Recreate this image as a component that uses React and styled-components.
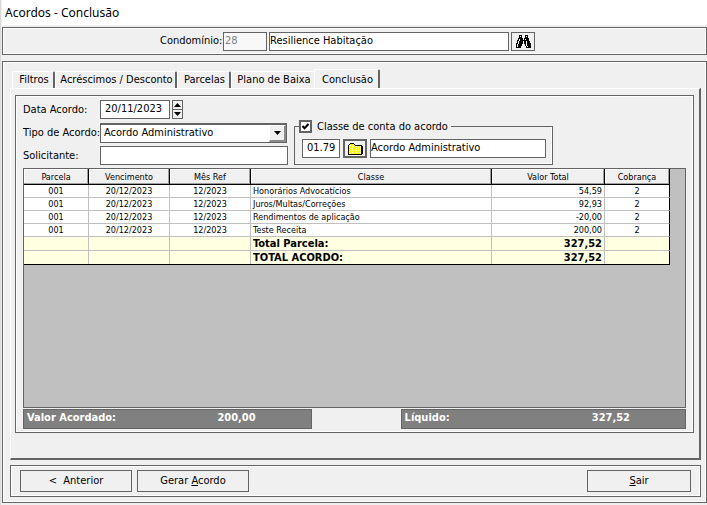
import React from "react";
import styled, { createGlobalStyle } from "styled-components";

const GlobalStyle = createGlobalStyle`
  * {
    box-sizing: border-box;
  }
  body {
    margin: 0;
    background: #f0f0f0;
    color: #000;
    font: 11px/14px "DejaVu Sans Condensed", "DejaVu Sans", Tahoma, sans-serif;
  }
  input, button, select {
    font: inherit;
    color: inherit;
    border-radius: 0;
    margin: 0;
    min-width: 0;
  }
`;

const Window = styled.div`
  display: flex;
  flex-direction: column;
  min-height: 100vh;
  padding: 0 0 2px 1px;
  border-left: 1px solid #d8d8d8;
`;

const Title = styled.h1`
  margin: 0;
  height: 25px;
  padding-left: 3px;
  background: #fff;
  font: 12px/25px "Noto Sans", sans-serif;
`;

const Panel = styled.div`
  border: 1px solid #646464;
  box-shadow: inset 0 0 0 1px #fff;
`;

const Header = styled(Panel)`
  display: flex;
  align-items: center;
  gap: 2px;
  height: 28px;
  margin-top: 2px;
  padding-left: 157px;
`;

const Main = styled(Panel)`
  flex: 1;
  display: flex;
  flex-direction: column;
  margin-top: 6px;
  padding: 7px 5px 5px 7px;
`;

const Label = styled.label`
  width: ${(p) => p.$width}px;
  flex: none;
  white-space: nowrap;
`;

const TextBox = styled.input`
  width: ${(p) => p.$width}px;
  height: 19px;
  padding: 0 0 2px ${(p) => p.$indent || 0}px;
  border: 1px solid #646464;
  background: #fff;
  outline: none;
  &:disabled {
    color: #808080;
    background: #f8f8f8;
  }
`;

const IconButton = styled.button`
  display: flex;
  align-items: center;
  justify-content: center;
  width: 24px;
  height: 19px;
  padding: 0;
  border: ${(p) => (p.$thick ? 2 : 1)}px solid #646464;
  background: #f0f0f0;
`;

const Tabs = styled.div`
  display: flex;
  align-items: flex-end;
  height: 19px;
  padding-left: 2px;
`;

const Tab = styled.button`
  width: ${(p) => p.$width}px;
  height: ${(p) => (p.$active ? 20 : 17)}px;
  margin-bottom: ${(p) => (p.$active ? -1 : 0)}px;
  padding: 0 0 0 2px;
  border: 1px solid #fff;
  border-right: ${(p) => (p.$flat ? "0" : "2px solid #646464")};
  border-bottom: 0;
  border-radius: 2px 2px 0 0;
  background: #f0f0f0;
  white-space: nowrap;
`;

const TabPage = styled.div`
  flex: 1;
  display: flex;
  flex-direction: column;
  padding: 6px 5px 25px 4px;
  border: 1px solid #fff;
  border-right: 2px solid #646464;
  border-bottom: 2px solid #646464;
`;

const Sheet = styled(Panel)`
  flex: 1;
  display: flex;
  flex-direction: column;
  padding: 2px 7px 3px;
`;

const Form = styled.div`
  display: flex;
  gap: 6px;
  margin-bottom: 1px;
`;

const Field = styled.div`
  display: flex;
  align-items: center;
  height: 23px;
`;

const Spinner = styled.div`
  display: flex;
  flex-direction: column;
  margin-left: 2px;
  border: 1px solid #646464;
`;

const SpinButton = styled.button`
  display: flex;
  align-items: center;
  justify-content: center;
  width: 9px;
  height: 8px;
  padding: 0;
  border: 0;
  background: #f0f0f0;
  & + & {
    height: 9px;
    border-top: 1px solid #646464;
  }
`;

const SelectWrap = styled.div`
  display: grid;
  width: 187px;
  height: 20px;
  border: 1px solid #646464;
  border-top: 2px solid #646464;
  background: #fff;
  > * {
    grid-area: 1 / 1;
  }
`;

const Select = styled.select`
  appearance: none;
  padding: 0 18px 0 3px;
  border: 0;
  background: transparent;
  outline: none;
`;

const Arrow = styled.span`
  display: flex;
  align-items: center;
  justify-content: center;
  justify-self: end;
  width: 17px;
  border: 1px solid #fff;
  border-right: 2px solid #8a8a8a;
  border-bottom: 2px solid #8a8a8a;
  background: #f0f0f0;
  pointer-events: none;
`;

const Group = styled.fieldset`
  width: 259px;
  height: 45px;
  margin: 22px 0 0;
  padding: 6px 0 0 4px;
  border: 1px solid #646464;
  box-shadow: inset -1px -1px 0 #fff;
`;

const Legend = styled.legend`
  display: flex;
  align-items: center;
  gap: 5px;
  height: 13px;
  padding: 0 3px 0 0;
  background: #f0f0f0;
`;

const Check = styled.input`
  appearance: none;
  width: 13px;
  height: 13px;
  margin: 0;
  border: 2px solid #646464;
  background: #fff
    url("data:image/svg+xml,%3Csvg xmlns='http://www.w3.org/2000/svg' viewBox='0 0 9 9'%3E%3Cpath d='M1.5 4l2 2.2L7.5 2' fill='none' stroke='%23000' stroke-width='2'/%3E%3C/svg%3E");
`;

const GroupRow = styled.div`
  display: flex;
  gap: 3px;
  padding-left: 3px;
`;

const GridArea = styled.div`
  flex: 1;
  min-height: 160px;
  padding-right: 15px;
  border: 1px solid #646464;
  background: #c0c0c0;
`;

const Table = styled.table`
  width: 100%;
  table-layout: fixed;
  border-collapse: separate;
  border-spacing: 0;
  border-bottom: 1px solid #000;
  font-size: 9px;
  line-height: 12px;
`;

const Th = styled.th`
  width: ${(p) => (p.$width ? p.$width + "px" : "auto")};
  height: 16px;
  padding: 0;
  border-right: 1px solid #000;
  border-bottom: 1px solid #000;
  background: #f0f0f0;
  box-shadow: inset -1px -1px 0 #a0a0a0, inset 1px 1px 0 #fff;
  font-weight: normal;
`;

const Td = styled.td`
  height: 13px;
  padding: 0 2px;
  border-right: 1px solid #c0c0c0;
  border-bottom: 1px solid #c0c0c0;
  background: #fff;
  text-align: ${(p) => p.$align || "center"};
  white-space: nowrap;
  &:last-child {
    border-right-color: #000;
  }
`;

const TotalTd = styled(Td)`
  height: 14px;
  background: #ffffe1;
  font-size: 11px;
  font-weight: bold;
  tr:last-child > & {
    height: 13px;
    border-bottom: 0;
  }
`;

const Summary = styled.div`
  display: flex;
  gap: 89px;
  margin-top: 1px;
`;

const SummaryBar = styled.div`
  flex: ${(p) => p.$grow} 1 0;
  display: flex;
  justify-content: space-between;
  height: 20px;
  padding: 1px 55px 0 3px;
  border: 1px solid #646464;
  background: #808080;
  color: #fff;
  font-weight: bold;
`;

const Footer = styled(Panel)`
  display: flex;
  gap: 5px;
  height: 32px;
  margin-top: 5px;
  padding: 4px 9px;
`;

const Button = styled.button`
  width: ${(p) => p.$width}px;
  height: 22px;
  margin-left: ${(p) => (p.$end ? "auto" : 0)};
  padding: 0;
  border: 1px solid #646464;
  background: #f0f0f0;
  white-space: pre;
`;

const colors = { "#": "#000", y: "#ffff00", w: "#fff" };

const binoculars = [
  "...###...###...",
  "...#w#...#w#...",
  "...###...###...",
  "..#####.#####..",
  "..#w###.#w###..",
  ".##w#########..",
  ".#w####w##w###.",
  ".#w####w##w###.",
  "##w####.##w####",
  "#w####...#w####",
  "#w####...#w####",
  "#w###.....#w###",
  "#####.....#####",
];

const folder = [
  "..####.........",
  ".#ywyy#........",
  "#ywyywy#######.",
  "#yyywyyywyyyw##",
  "#wyyywyyywyyy##",
  "#yyywyyywyyyw##",
  "#wyyywyyywyyy##",
  "#yyywyyywyyyw##",
  "#wyyywyyywyyy##",
  "#yyywyyywyyyw##",
  "#wyyywyyywyyy##",
  "##############.",
];

function PixelIcon({ rows }) {
  return (
    <svg width={rows[0].length} height={rows.length} shapeRendering="crispEdges" aria-hidden="true">
      {rows.map((row, y) =>
        [...row].map((c, x) =>
          colors[c] ? (
            <rect key={`${x}-${y}`} x={x} y={y} width="1" height="1" fill={colors[c]} />
          ) : null
        )
      )}
    </svg>
  );
}

function Triangle({ up, size = 7 }) {
  const h = (size + 1) / 2;
  return (
    <svg width={size} height={h} aria-hidden="true">
      <path d={up ? `M0 ${h}L${size / 2} 0L${size} ${h}z` : `M0 0H${size}L${size / 2} ${h}z`} />
    </svg>
  );
}

const tabs = [
  { name: "Filtros", width: 43 },
  { name: "Acréscimos / Desconto", width: 122 },
  { name: "Parcelas", width: 54 },
  { name: "Plano de Baixa", width: 83, flat: true },
  { name: "Conclusão", width: 66, active: true },
];

const rows = [
  ["Honorários Advocatícios", "54,59"],
  ["Juros/Multas/Correções", "92,93"],
  ["Rendimentos de aplicação", "-20,00"],
  ["Teste Receita", "200,00"],
];

const totals = [
  ["Total Parcela:", "327,52"],
  ["TOTAL ACORDO:", "327,52"],
];

function App() {
  return (
    <>
      <GlobalStyle />
      <Window>
        <Title>Acordos - Conclusão</Title>
        <Header>
          <Label htmlFor="condominio" $width={61}>Condomínio:</Label>
          <TextBox id="condominio" $width={44} $indent={1} defaultValue="28" disabled />
          <TextBox aria-label="Nome do condomínio" $width={240} defaultValue="Resilience Habitação" />
          <IconButton type="button" aria-label="Pesquisar">
            <PixelIcon rows={binoculars} />
          </IconButton>
        </Header>
        <Main>
          <Tabs role="tablist">
            {tabs.map((t) => (
              <Tab
                key={t.name}
                type="button"
                role="tab"
                aria-selected={!!t.active}
                $width={t.width}
                $active={t.active}
                $flat={t.flat}
              >
                {t.name}
              </Tab>
            ))}
          </Tabs>
          <TabPage>
            <Sheet>
              <Form>
                <div>
                  <Field>
                    <Label htmlFor="data" $width={77}>Data Acordo:</Label>
                    <TextBox id="data" $width={70} $indent={4} defaultValue="20/11/2023" />
                    <Spinner>
                      <SpinButton type="button" aria-label="Próximo dia">
                        <Triangle up />
                      </SpinButton>
                      <SpinButton type="button" aria-label="Dia anterior">
                        <Triangle />
                      </SpinButton>
                    </Spinner>
                  </Field>
                  <Field>
                    <Label htmlFor="tipo" $width={77}>Tipo de Acordo:</Label>
                    <SelectWrap>
                      <Select id="tipo">
                        <option>Acordo Administrativo</option>
                      </Select>
                      <Arrow>
                        <Triangle />
                      </Arrow>
                    </SelectWrap>
                  </Field>
                  <Field>
                    <Label htmlFor="solicitante" $width={77}>Solicitante:</Label>
                    <TextBox id="solicitante" $width={188} />
                  </Field>
                </div>
                <Group>
                  <Legend>
                    <Check id="classe" type="checkbox" defaultChecked />
                    <label htmlFor="classe">Classe de conta do acordo</label>
                  </Legend>
                  <GroupRow>
                    <TextBox aria-label="Código da classe" $width={38} $indent={4} defaultValue="01.79" />
                    <IconButton type="button" aria-label="Abrir classes" $thick>
                      <PixelIcon rows={folder} />
                    </IconButton>
                    <TextBox aria-label="Nome da classe" $width={176} defaultValue="Acordo Administrativo" />
                  </GroupRow>
                </Group>
              </Form>
              <GridArea>
                <Table>
                  <thead>
                    <tr>
                      <Th $width={65}>Parcela</Th>
                      <Th $width={81}>Vencimento</Th>
                      <Th $width={81}>Mês Ref</Th>
                      <Th>Classe</Th>
                      <Th $width={113}>Valor Total</Th>
                      <Th $width={65}>Cobrança</Th>
                    </tr>
                  </thead>
                  <tbody>
                    {rows.map(([classe, valor]) => (
                      <tr key={classe}>
                        <Td>001</Td>
                        <Td>20/12/2023</Td>
                        <Td>12/2023</Td>
                        <Td $align="left">{classe}</Td>
                        <Td $align="right">{valor}</Td>
                        <Td>2</Td>
                      </tr>
                    ))}
                    {totals.map(([classe, valor]) => (
                      <tr key={classe}>
                        <TotalTd />
                        <TotalTd />
                        <TotalTd />
                        <TotalTd $align="left">{classe}</TotalTd>
                        <TotalTd $align="right">{valor}</TotalTd>
                        <TotalTd />
                      </tr>
                    ))}
                  </tbody>
                </Table>
              </GridArea>
              <Summary>
                <SummaryBar $grow={289}>
                  <span>Valor Acordado:</span>
                  <span>200,00</span>
                </SummaryBar>
                <SummaryBar $grow={285}>
                  <span>Líquido:</span>
                  <span>327,52</span>
                </SummaryBar>
              </Summary>
            </Sheet>
          </TabPage>
          <Footer>
            <Button type="button" $width={112}>{"<  Anterior"}</Button>
            <Button type="button" $width={112}>
              Gerar <u>A</u>cordo
            </Button>
            <Button type="button" $width={104} $end>
              <u>S</u>air
            </Button>
          </Footer>
        </Main>
      </Window>
    </>
  );
}

export default App;
